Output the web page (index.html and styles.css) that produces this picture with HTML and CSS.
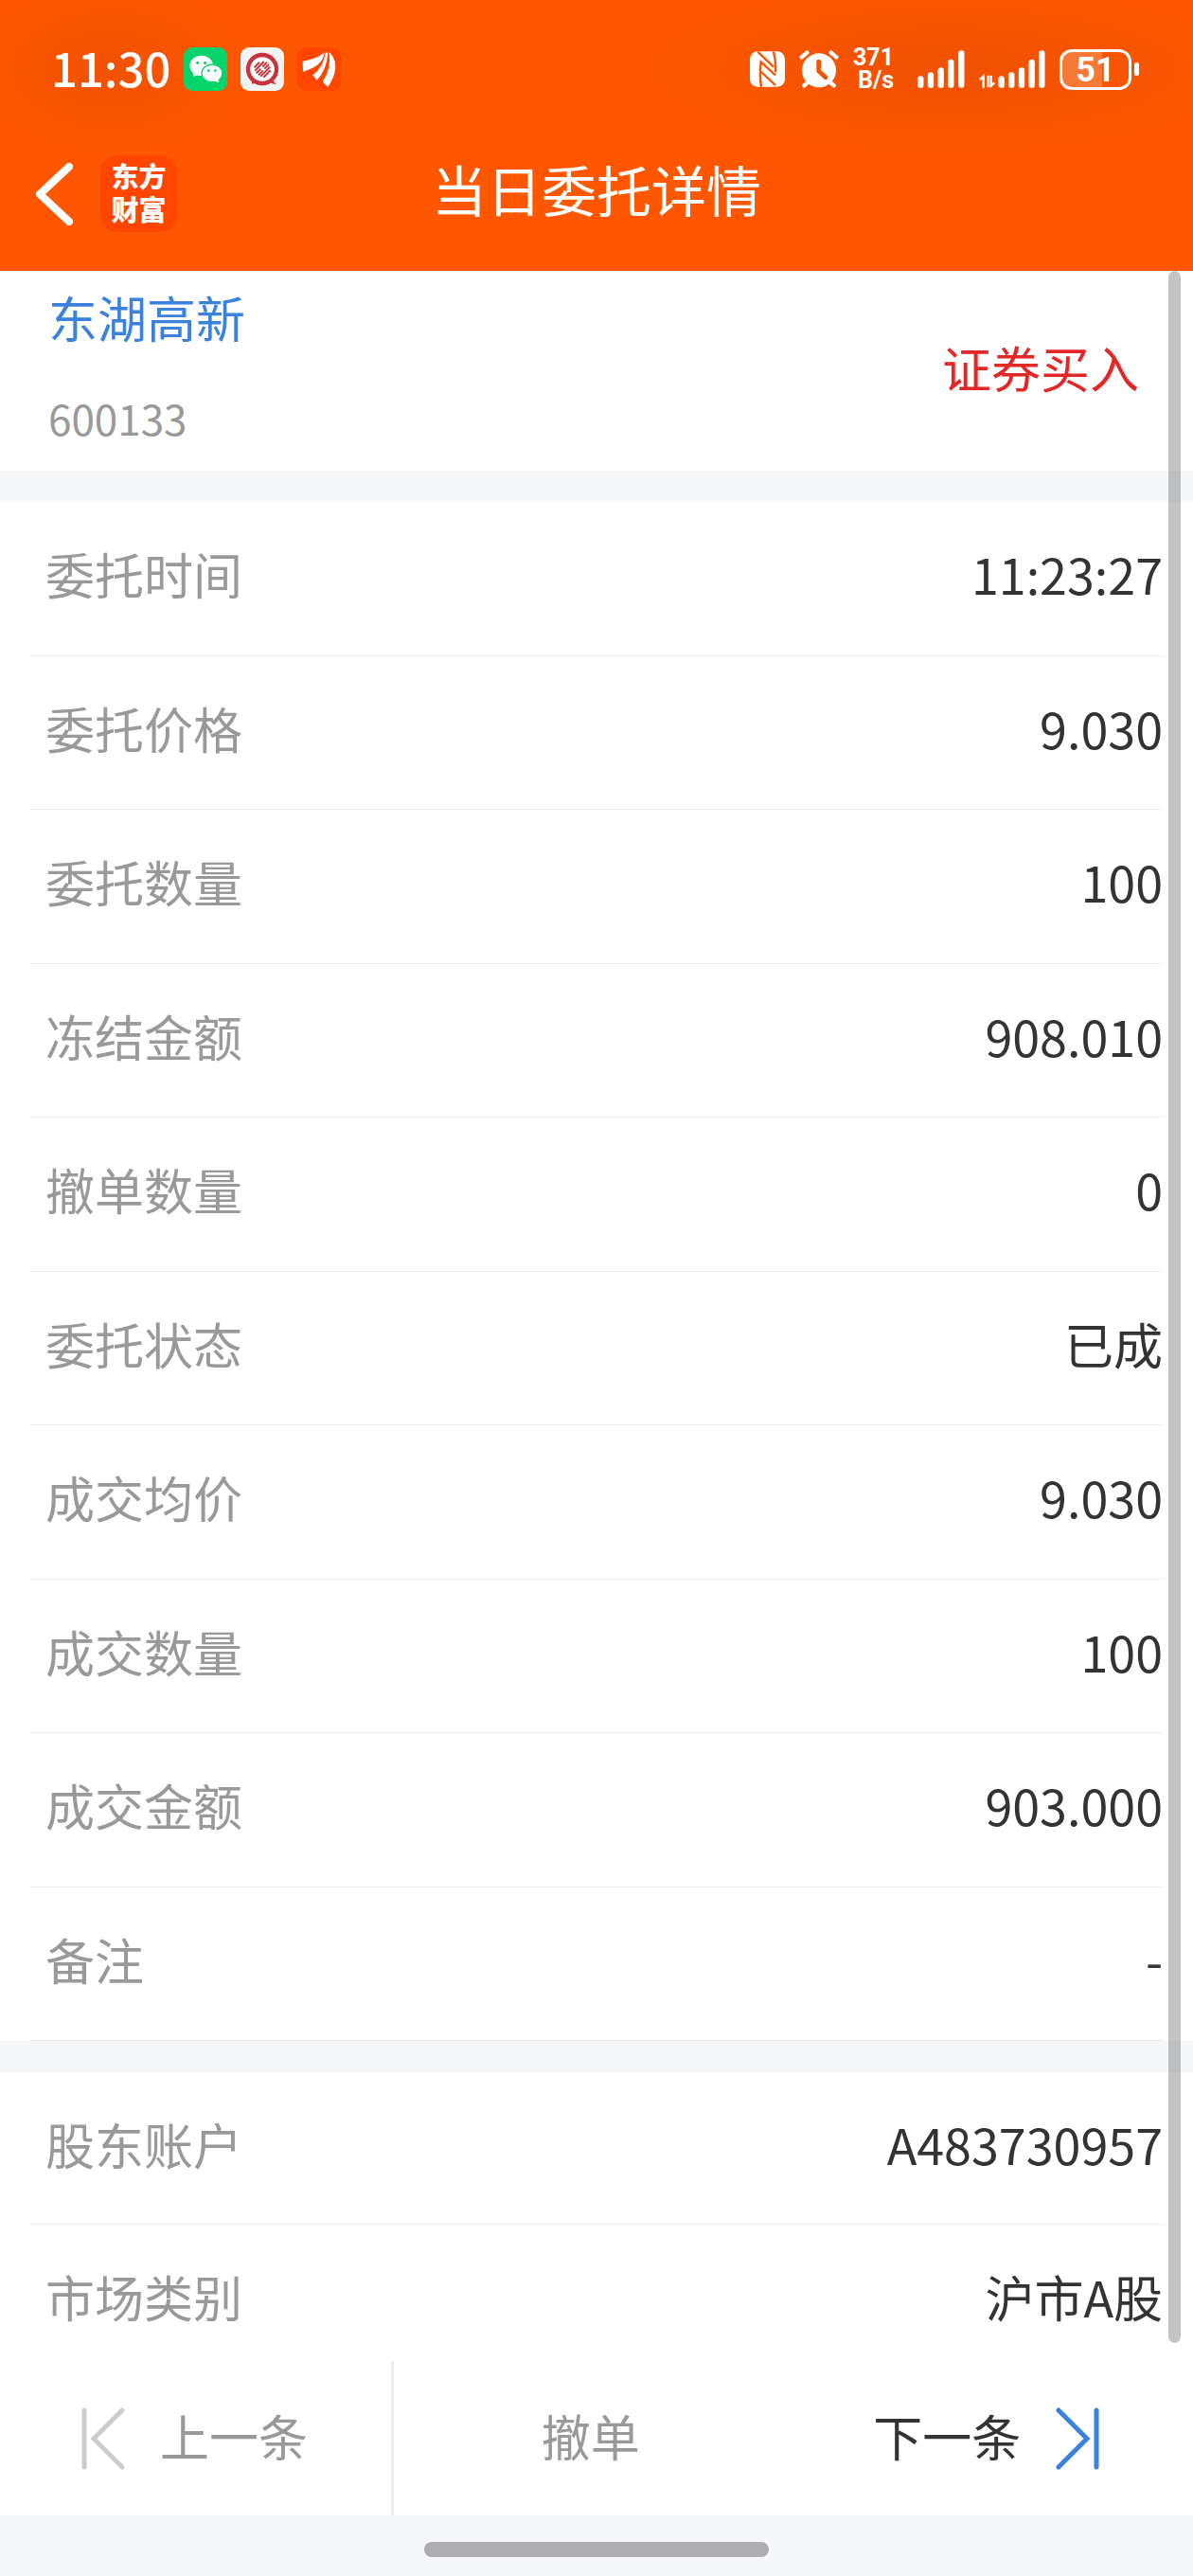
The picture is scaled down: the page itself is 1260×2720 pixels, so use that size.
FILE: index.html
```html
<!DOCTYPE html>
<html lang="zh-CN">
<head>
    <meta charset="UTF-8">
    <meta name="viewport" content="width=device-width, initial-scale=1.0">
    <title>当日委托详情</title>
    <link rel="stylesheet" href="styles.css">
</head>
<body>
    <header class="header">
        <div class="status-bar">
            <div class="status-left">
                <span class="clock">11:30</span>
                <svg class="app-badge" viewBox="0 0 138 138">
                    <rect width="138" height="138" rx="28" fill="#07d56b"/>
                    <ellipse cx="56" cy="58" rx="37" ry="32" fill="#fff"/>
                    <path d="M32 78l-2 14 18-6z" fill="#fff"/>
                    <ellipse cx="90" cy="82" rx="33" ry="28" fill="#fff" stroke="#07d56b" stroke-width="4"/>
                    <path d="M96 106l16 6-3-14z" fill="#fff"/>
                    <g fill="#07d56b">
                        <circle cx="44" cy="49" r="5"/>
                        <circle cx="68" cy="49" r="5"/>
                        <circle cx="79" cy="74" r="4"/>
                        <circle cx="100" cy="74" r="4"/>
                    </g>
                </svg>
                <svg class="app-badge" viewBox="0 0 138 138">
                    <rect width="138" height="138" rx="28" fill="#f3f2f3"/>
                    <path d="M36 94v22l22-6zM98 100l16 18-28-7z" fill="#c8323c"/>
                    <circle cx="69" cy="69" r="45" fill="#fff" stroke="#c8323c" stroke-width="13"/>
                    <g stroke="#c8323c" stroke-width="6">
                        <path d="M44 64l16-17M46 74l28-29M50 82l14-14M70 62l14-15M57 88l14-14M76 68l14-14M64 92l30-30M73 95l22-22"/>
                    </g>
                </svg>
                <svg class="app-badge" viewBox="0 0 138 138">
                    <rect width="138" height="138" rx="28" fill="#ff4600"/>
                    <g fill="#fff">
                        <path d="M17 44Q60 38 86 16Q82 60 18 77Z"/>
                        <path d="M49 88Q82 65 90 16L97 17Q94 70 62 104Z"/>
                        <path d="M101 16C128 40 128 82 97 125L80 109Q108 70 101 16Z"/>
                    </g>
                </svg>
            </div>
            <div class="status-right">
                <svg class="icon-nfc" viewBox="0 0 111 114">
                    <rect y="1" width="111" height="112" rx="24" fill="#fff"/>
                    <path d="M25 2L75 50M75 2Q83 30 81 66M81 76L35 34Q30 80 36 113M81 108L36 66" fill="none" stroke="#f45302" stroke-width="7"/>
                </svg>
                <svg class="icon-alarm" viewBox="0 0 126 120">
                    <circle cx="63" cy="64" r="54" fill="#fff"/>
                    <path d="M8 22L25 8M118 22L101 8M16 112l16-14M110 112L94 98" stroke="#fff" stroke-width="13" stroke-linecap="round"/>
                    <path d="M62 36v30l22 20" fill="none" stroke="#f45302" stroke-width="14" stroke-linecap="round"/>
                </svg>
                <div class="net-speed"><span>371</span><span>B/s</span></div>
                <svg class="icon-signal" viewBox="0 0 150 120">
                    <path d="M10 91v19M42 79v31M74 64v46M106 39v71M139 10v100" stroke="#fff" stroke-width="19" stroke-linecap="round"/>
                </svg>
                <svg class="icon-signal-data" viewBox="0 0 210 120">
                    <path d="M71 91v19M103 79v31M135 64v46M167 39v71M199 10v100" stroke="#fff" stroke-width="19" stroke-linecap="round"/>
                    <path d="M2 94l12-11v36M29 80v37M38 80v33l11-10" fill="none" stroke="#fff" stroke-width="7"/>
                </svg>
                <div class="battery"><span>51</span></div>
            </div>
        </div>
        <div class="title-bar">
            <div class="title-left">
                <button type="button" class="back" aria-label="返回">
                    <svg viewBox="0 0 39 66"><path d="M35 4L4 33l31 29" fill="none" stroke="#fff" stroke-width="8" stroke-linecap="round"/></svg>
                </button>
                <span class="brand">东方<br>财富</span>
            </div>
            <h1 class="title">当日委托详情</h1>
        </div>
    </header>

    <main class="content">
        <section class="summary">
            <div>
                <a class="stock-name" href="#">东湖高新</a>
                <div class="stock-code">600133</div>
            </div>
            <div class="trade-type">证券买入</div>
        </section>

        <dl class="list list-order">
            <div class="row"><dt>委托时间</dt><dd>11:23:27</dd></div>
            <div class="row"><dt>委托价格</dt><dd>9.030</dd></div>
            <div class="row"><dt>委托数量</dt><dd>100</dd></div>
            <div class="row"><dt>冻结金额</dt><dd>908.010</dd></div>
            <div class="row"><dt>撤单数量</dt><dd>0</dd></div>
            <div class="row"><dt>委托状态</dt><dd>已成</dd></div>
            <div class="row"><dt>成交均价</dt><dd>9.030</dd></div>
            <div class="row"><dt>成交数量</dt><dd>100</dd></div>
            <div class="row"><dt>成交金额</dt><dd>903.000</dd></div>
            <div class="row"><dt>备注</dt><dd>-</dd></div>
        </dl>

        <dl class="list list-account">
            <div class="row"><dt>股东账户</dt><dd>A483730957</dd></div>
            <div class="row"><dt>市场类别</dt><dd>沪市A股</dd></div>
        </dl>
        <div class="scrollbar"></div>
    </main>

    <footer class="actions">
        <button type="button" class="prev" disabled>
            <svg viewBox="0 0 46 66"><path d="M3 3v60M43 3L13 33l30 30" fill="none" stroke="#ccc" stroke-width="5" stroke-linecap="round"/></svg>
            <span>上一条</span>
        </button>
        <button type="button" disabled><span>撤单</span></button>
        <button type="button" class="next">
            <span>下一条</span>
            <svg viewBox="0 0 46 66"><path d="M43 3v60M3 3l30 30L3 63" fill="none" stroke="#3a82de" stroke-width="5" stroke-linecap="round"/></svg>
        </button>
    </footer>
    <div class="gesture-bar"><div class="handle"></div></div>
</body>
</html>
```
FILE: styles.css
```css
* {
    box-sizing: border-box;
}
body {
    display: flex;
    flex-direction: column;
    min-height: 100vh;
    margin: 0;
    background-color: #fff;
    color: #333;
    font-family: "Noto Sans CJK SC", "Noto Sans", sans-serif;
    font-size: 52px;
    line-height: 58px;
}
svg {
    display: block;
    flex: none;
}
button {
    padding: 0;
    border: none;
    background: none;
    color: inherit;
    font: inherit;
}
h1, dl, dd {
    margin: 0;
}

/* header */
.header {
    background-color: #ff5700;
    background-image:
        radial-gradient(ellipse 150px 90px at 116px 73px, rgba(225, 75, 5, 0.45), transparent),
        radial-gradient(ellipse 330px 90px at calc(100% - 260px) 73px, rgba(225, 75, 5, 0.5), transparent);
    color: #fff;
}
.status-bar {
    display: flex;
    justify-content: space-between;
    padding: 23px 57px 0 54px;
    height: 123px;
}
.status-left, .status-right {
    display: flex;
    align-items: center;
}
.status-left {
    gap: 14px;
}
.status-right {
    gap: 15px;
}
.clock {
    padding-bottom: 4px;
    font-size: 49px;
    font-weight: 500;
}
.app-badge {
    width: 46px;
    height: 46px;
}
.icon-nfc {
    width: 37px;
    height: 38px;
}
.icon-alarm {
    width: 42px;
    height: 40px;
}
.net-speed {
    display: flex;
    flex-direction: column;
    align-items: flex-end;
    margin-right: 10px;
    font-family: Roboto, sans-serif;
    font-size: 25px;
    font-weight: 700;
    line-height: 24px;
}
.icon-signal {
    width: 50px;
    height: 40px;
}
.icon-signal-data {
    width: 70px;
    height: 40px;
}
.battery {
    position: relative;
    width: 76px;
    height: 43px;
    margin-right: 8px;
    border: 3px solid #fff;
    border-radius: 13px;
    background: linear-gradient(to right, #f77936 60%, transparent 60%);
    font-family: Roboto, sans-serif;
    font-size: 36px;
    font-weight: 700;
    line-height: 38px;
    text-align: center;
}
.battery::after {
    content: "";
    position: absolute;
    top: 11px;
    right: -11px;
    width: 5px;
    height: 14px;
    border-radius: 3px;
    background-color: #fff;
}
.title-bar {
    display: grid;
    grid-template-columns: 1fr auto 1fr;
    align-items: center;
    height: 163px;
    padding: 0 38px;
}
.title-left {
    display: flex;
    align-items: center;
    gap: 29px;
}
.back svg {
    width: 39px;
    height: 66px;
}
.brand {
    width: 81px;
    padding: 4px 0 7px;
    border-radius: 18px;
    background-color: #ff4600;
    font-size: 29px;
    font-weight: 900;
    line-height: 35px;
    text-align: center;
}
.title {
    padding-bottom: 12px;
    font-size: 58px;
    font-weight: 400;
    line-height: 72px;
}

/* order details */
.content {
    position: relative;
    display: flex;
    flex: 1;
    flex-direction: column;
}
.summary {
    display: flex;
    justify-content: space-between;
    padding: 20px 57px 23px 51px;
    height: 211px;
}
.stock-name {
    color: #3a82de;
    text-decoration: none;
}
.stock-code {
    margin-top: 48px;
    color: #999;
    font-size: 44px;
}
.trade-type {
    align-self: center;
    padding-bottom: 4px;
    color: #e32626;
}
.list {
    display: flex;
    flex-direction: column;
    padding: 0 32px;
    border-top: 33px solid #f6f7f9;
}
.list-order {
    flex: 1;
}
.row {
    display: flex;
    flex: 1;
    justify-content: space-between;
    padding: 47px 0 55px 16px;
    border-bottom: 1px solid #ebebeb;
}
.row dt {
    color: #999;
}
.list-account .row:last-child {
    padding-bottom: 39px;
    border-bottom: none;
}
.scrollbar {
    position: absolute;
    top: 0;
    right: 13px;
    bottom: 19px;
    width: 13px;
    border-radius: 7px;
    background-color: rgba(0, 0, 0, 0.23);
}

/* bottom buttons */
.actions {
    display: grid;
    grid-template-columns: 33% 33% 34%;
    height: 163px;
}
.actions button {
    display: flex;
    align-items: center;
    justify-content: center;
    gap: 37px;
}
.actions button:disabled {
    color: #999;
}
.actions .prev {
    padding-right: 2px;
    border-right: 3px solid #ececec;
}
.actions .next {
    padding-right: 8px;
}
.actions span {
    padding-bottom: 6px;
}
.actions svg {
    width: 46px;
    height: 66px;
}
.gesture-bar {
    display: flex;
    justify-content: center;
    padding: 28px 0 20px;
    background-color: #f6f7f9;
}
.handle {
    width: 364px;
    height: 16px;
    border-radius: 8px;
    background-color: #adadaf;
}
```
